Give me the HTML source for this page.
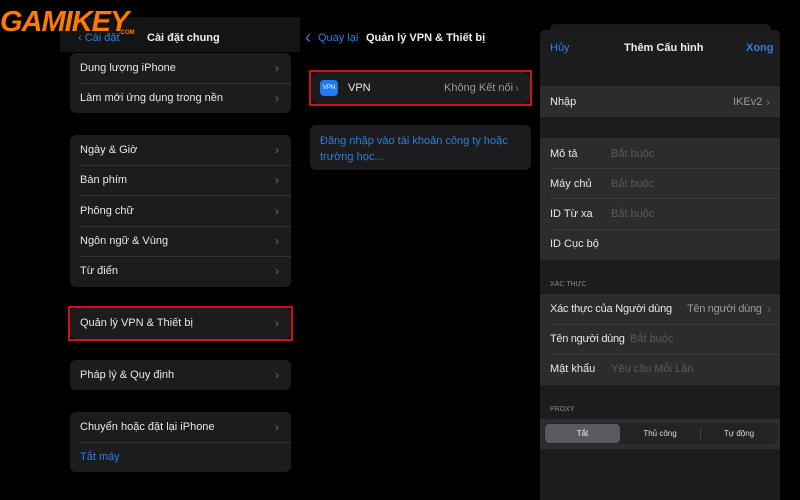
<!DOCTYPE html>
<html><head><meta charset="utf-8"><style>
*{margin:0;padding:0;box-sizing:border-box}
body{width:800px;height:500px;background:#000;position:relative;overflow:hidden;font-family:"Liberation Sans",sans-serif;color:#e8e8ea;font-size:11px}
.a{position:absolute}
.card{position:absolute;background:#1c1c1e;border-radius:6px}
.chev{position:absolute;color:#6d6d72;font-size:12px}
.red{position:absolute;border:2px solid #d0101e}
.sep{position:absolute;height:1px;background:#333336}
.blue{color:#2d7fe0}
.ph{color:#5a5a5e}
</style></head><body>
<!-- left -->
<div class="a" style="left:60px;top:17px;width:240px;height:35px;background:#141414"></div>
<div class="a blue" style="left:78px;top:32px;font-size:11px">‹ Cài đặt</div>
<div class="a" style="left:147px;top:32px;font-size:11px;font-weight:bold;color:#eee">Cài đặt chung</div>
<div class="a" style="left:0px;top:6px;font-size:29px;font-weight:900;color:#ff7a00;letter-spacing:-1px;font-style:italic">GAMIKEY</div>
<div class="a" style="left:119px;top:30px;font-size:6px;font-weight:bold;color:#ff7a00">.COM</div>

<div class="card" style="left:70px;top:53px;width:221px;height:60px"></div>
<div class="a" style="left:80px;top:62px">Dung lượng iPhone</div><div class="chev" style="left:275px;top:61px">›</div>
<div class="sep" style="left:80px;top:83px;width:211px"></div>
<div class="a" style="left:80px;top:92px">Làm mới ứng dụng trong nền</div><div class="chev" style="left:275px;top:91px">›</div>

<div class="card" style="left:70px;top:135px;width:221px;height:152px"></div>
<div class="a" style="left:80px;top:144px">Ngày &amp; Giờ</div><div class="chev" style="left:275px;top:143px">›</div>
<div class="a" style="left:80px;top:174px">Bàn phím</div><div class="chev" style="left:275px;top:173px">›</div>
<div class="a" style="left:80px;top:205px">Phông chữ</div><div class="chev" style="left:275px;top:204px">›</div>
<div class="a" style="left:80px;top:235px">Ngôn ngữ &amp; Vùng</div><div class="chev" style="left:275px;top:234px">›</div>
<div class="a" style="left:80px;top:265px">Từ điển</div><div class="chev" style="left:275px;top:264px">›</div>
<div class="sep" style="left:80px;top:165px;width:211px"></div><div class="sep" style="left:80px;top:195px;width:211px"></div><div class="sep" style="left:80px;top:226px;width:211px"></div><div class="sep" style="left:80px;top:256px;width:211px"></div>

<div class="card" style="left:70px;top:308px;width:221px;height:31px"></div>
<div class="red" style="left:68px;top:306px;width:225px;height:35px"></div>
<div class="a" style="left:80px;top:317px">Quản lý VPN &amp; Thiết bị</div><div class="chev" style="left:275px;top:316px">›</div>

<div class="card" style="left:70px;top:360px;width:221px;height:30px"></div>
<div class="a" style="left:80px;top:369px">Pháp lý &amp; Quy định</div><div class="chev" style="left:275px;top:368px">›</div>

<div class="card" style="left:70px;top:412px;width:221px;height:60px"></div>
<div class="a" style="left:80px;top:421px">Chuyển hoặc đặt lại iPhone</div><div class="chev" style="left:275px;top:420px">›</div>
<div class="sep" style="left:80px;top:442px;width:211px"></div>
<div class="a blue" style="left:80px;top:451px">Tắt máy</div>

<!-- middle -->
<div class="a blue" style="left:305px;top:27px;font-size:18px">‹</div>
<div class="a blue" style="left:318px;top:32px">Quay lại</div>
<div class="a" style="left:366px;top:32px;font-weight:bold;color:#eee">Quản lý VPN &amp; Thiết bị</div>
<div class="card" style="left:311px;top:72px;width:219px;height:32px"></div>
<div class="red" style="left:309px;top:70px;width:223px;height:36px"></div>
<div class="a" style="left:320px;top:80px;width:18px;height:16px;background:#1e7bf0;border-radius:4px;font-size:6px;color:#fff;text-align:center;line-height:16px">VPN</div>
<div class="a" style="left:348px;top:82px">VPN</div>
<div class="a" style="left:444px;top:82px;color:#9a9a9e">Không Kết nối</div><div class="chev" style="left:515px;top:81px">›</div>
<div class="card" style="left:310px;top:125px;width:221px;height:45px"></div>
<div class="a blue" style="left:320px;top:133px;line-height:16px;width:200px">Đăng nhập vào tài khoản công ty hoặc trường học...</div>

<!-- right -->
<div class="a" style="left:550px;top:24px;width:221px;height:10px;background:#1a1a1c;border-radius:5px"></div>
<div class="a" style="left:540px;top:30px;width:240px;height:470px;background:#1c1c1e;border-radius:5px 5px 0 0"></div>
<div class="a blue" style="left:550px;top:42px">Hủy</div>
<div class="a" style="left:624px;top:42px;font-weight:bold;color:#eee">Thêm Cấu hình</div>
<div class="a blue" style="left:746px;top:42px;font-weight:bold">Xong</div>
<div class="a" style="left:540px;top:86px;width:240px;height:31px;background:#2c2c2e"></div>
<div class="a" style="left:550px;top:96px">Nhập</div>
<div class="a" style="left:733px;top:96px;color:#9a9a9e">IKEv2</div><div class="chev" style="left:766px;top:95px">›</div>

<div class="a" style="left:540px;top:138px;width:240px;height:122px;background:#2c2c2e"></div>
<div class="a" style="left:550px;top:148px">Mô tả</div><div class="a ph" style="left:611px;top:148px">Bắt buộc</div>
<div class="a" style="left:550px;top:178px">Máy chủ</div><div class="a ph" style="left:611px;top:178px">Bắt buộc</div>
<div class="a" style="left:550px;top:208px">ID Từ xa</div><div class="a ph" style="left:611px;top:208px">Bắt buộc</div>
<div class="a" style="left:550px;top:238px">ID Cục bộ</div>
<div class="sep" style="left:550px;top:168px;width:230px;background:#3a3a3c"></div><div class="sep" style="left:550px;top:198px;width:230px;background:#3a3a3c"></div><div class="sep" style="left:550px;top:229px;width:230px;background:#3a3a3c"></div>

<div class="a" style="left:550px;top:281px;font-size:7px;color:#8a8a8e">XÁC THỰC</div>
<div class="a" style="left:540px;top:294px;width:240px;height:91px;background:#2c2c2e"></div>
<div class="a" style="left:550px;top:303px;letter-spacing:-0.2px">Xác thực của Người dùng</div>
<div class="a" style="left:687px;top:303px;color:#9a9a9e;letter-spacing:-0.3px">Tên người dùng</div><div class="chev" style="left:767px;top:302px">›</div>
<div class="a" style="left:550px;top:333px;letter-spacing:-0.3px">Tên người dùng</div><div class="a ph" style="left:630px;top:333px">Bắt buộc</div>
<div class="a" style="left:550px;top:363px">Mật khẩu</div><div class="a ph" style="left:611px;top:363px">Yêu cầu Mỗi Lần</div>
<div class="sep" style="left:550px;top:324px;width:230px;background:#3a3a3c"></div><div class="sep" style="left:550px;top:354px;width:230px;background:#3a3a3c"></div>

<div class="a" style="left:550px;top:406px;font-size:7px;color:#8a8a8e">PROXY</div>
<div class="a" style="left:540px;top:419px;width:240px;height:30px;background:#2c2c2e"></div>
<div class="a" style="left:544px;top:423px;width:233px;height:21px;background:#232325;border-radius:4px"></div>
<div class="a" style="left:545px;top:424px;width:75px;height:19px;background:#5a5a5e;border-radius:4px;font-size:8px;text-align:center;line-height:19px;color:#eee">Tắt</div>
<div class="a" style="left:620px;top:424px;width:80px;font-size:8px;text-align:center;line-height:19px;color:#ddd">Thủ công</div>
<div class="a" style="left:700px;top:428px;width:1px;height:11px;background:#444"></div>
<div class="a" style="left:700px;top:424px;width:78px;font-size:8px;text-align:center;line-height:19px;color:#ddd">Tự động</div>
</body></html>
